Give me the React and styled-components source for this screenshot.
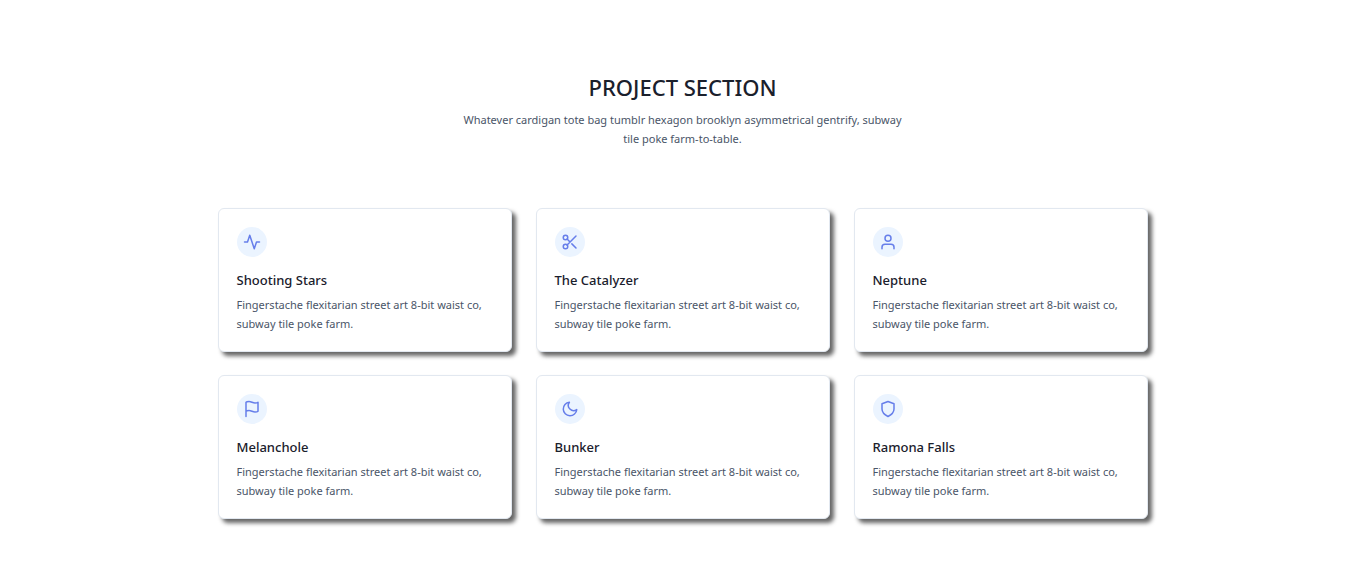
import React from "react";
import styled, { createGlobalStyle } from "styled-components";

const GlobalStyle = createGlobalStyle`
  *, *::before, *::after { box-sizing: border-box; }
  body {
    margin: 0;
    background: #fff;
    color: #4a5568;
    font-family: "Noto Sans", "Open Sans", sans-serif;
    font-size: 11px;
    line-height: 19px;
  }
  h1, h2, p { margin: 0; }
`;

const Section = styled.section`
  max-width: 966px;
  margin: 0 auto;
  padding: 72px 18px 56px;
`;

const Header = styled.header`
  display: flex;
  flex-direction: column;
  align-items: center;
  gap: 8px;
  margin-bottom: 60px;
  text-align: center;
`;

const Heading = styled.h1`
  color: #1a202c;
  font-size: 22px;
  font-weight: 500;
  line-height: 30px;
`;

const Lead = styled.p`
  max-width: 450px;
`;

const Grid = styled.div`
  display: grid;
  grid-template-columns: repeat(3, minmax(0, 1fr));
  gap: 23px 24px;

  @media (max-width: 768px) {
    grid-template-columns: repeat(2, minmax(0, 1fr));
  }
  @media (max-width: 520px) {
    grid-template-columns: minmax(0, 1fr);
  }
`;

const Card = styled.article`
  padding: 18px;
  border: 1px solid #e2e8f0;
  border-radius: 6px;
  background: #fff;
  box-shadow: 4px 4px 4px #666;
`;

const IconBadge = styled.div`
  display: flex;
  align-items: center;
  justify-content: center;
  width: 30px;
  height: 30px;
  margin-bottom: 12px;
  border-radius: 50%;
  background: #ebf4ff;
  color: #667eea;
`;

const Icon = styled.svg`
  width: 18px;
  height: 18px;
  fill: none;
  stroke: currentColor;
  stroke-width: 2;
  stroke-linecap: round;
  stroke-linejoin: round;
`;

const CardTitle = styled.h2`
  margin-bottom: 4px;
  color: #1a202c;
  font-size: 13px;
  font-weight: 500;
  line-height: 22px;
`;

const projects = [
  { title: "Shooting Stars", icon: <path d="M22 12h-4l-3 9L9 3l-3 9H2" /> },
  {
    title: "The Catalyzer",
    icon: (
      <>
        <circle cx="6" cy="6" r="3" />
        <circle cx="6" cy="18" r="3" />
        <path d="M20 4L8.12 15.88M14.47 14.48L20 20M8.12 8.12L12 12" />
      </>
    ),
  },
  {
    title: "Neptune",
    icon: (
      <>
        <path d="M20 21v-2a4 4 0 00-4-4H8a4 4 0 00-4 4v2" />
        <circle cx="12" cy="7" r="4" />
      </>
    ),
  },
  {
    title: "Melanchole",
    icon: <path d="M4 15s1-1 4-1 5 2 8 2 4-1 4-1V3s-1 1-4 1-5-2-8-2-4 1-4 1zM4 22v-7" />,
  },
  { title: "Bunker", icon: <path d="M21 12.79A9 9 0 1111.21 3 7 7 0 0021 12.79z" /> },
  { title: "Ramona Falls", icon: <path d="M12 22s8-4 8-10V5l-8-3-8 3v7c0 6 8 10 8 10z" /> },
];

export default function App() {
  return (
    <>
      <GlobalStyle />
      <Section>
        <Header>
          <Heading>PROJECT SECTION</Heading>
          <Lead>
            Whatever cardigan tote bag tumblr hexagon brooklyn asymmetrical gentrify, subway tile
            poke farm-to-table.
          </Lead>
        </Header>
        <Grid>
          {projects.map(({ title, icon }) => (
            <Card key={title}>
              <IconBadge>
                <Icon viewBox="0 0 24 24" aria-hidden="true">
                  {icon}
                </Icon>
              </IconBadge>
              <CardTitle>{title}</CardTitle>
              <p>Fingerstache flexitarian street art 8-bit waist co, subway tile poke farm.</p>
            </Card>
          ))}
        </Grid>
      </Section>
    </>
  );
}
